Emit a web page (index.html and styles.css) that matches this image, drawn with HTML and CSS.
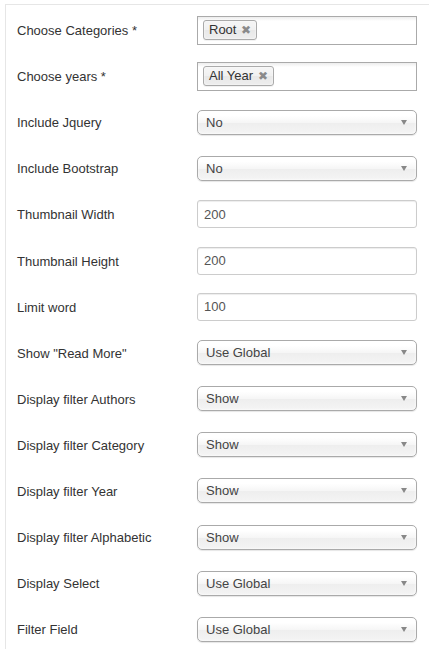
FILE: index.html
```html
<!DOCTYPE html>
<html>
<head>
<meta charset="utf-8">
<link rel="stylesheet" href="styles.css">
</head>
<body>
<div class="panel">
  <div class="row"><div class="label">Choose Categories *</div>
    <div class="multi"><span class="tag">Root<span class="x">&#x2716;</span></span></div></div>
  <div class="row"><div class="label">Choose years *</div>
    <div class="multi"><span class="tag">All Year<span class="x">&#x2716;</span></span></div></div>
  <div class="row"><div class="label">Include Jquery</div>
    <div class="select"><span>No</span><i class="arrow"></i></div></div>
  <div class="row"><div class="label">Include Bootstrap</div>
    <div class="select"><span>No</span><i class="arrow"></i></div></div>
  <div class="row"><div class="label">Thumbnail Width</div>
    <div class="input">200</div></div>
  <div class="row"><div class="label">Thumbnail Height</div>
    <div class="input">200</div></div>
  <div class="row"><div class="label">Limit word</div>
    <div class="input">100</div></div>
  <div class="row"><div class="label">Show "Read More"</div>
    <div class="select"><span>Use Global</span><i class="arrow"></i></div></div>
  <div class="row"><div class="label">Display filter Authors</div>
    <div class="select"><span>Show</span><i class="arrow"></i></div></div>
  <div class="row"><div class="label">Display filter Category</div>
    <div class="select"><span>Show</span><i class="arrow"></i></div></div>
  <div class="row"><div class="label">Display filter Year</div>
    <div class="select"><span>Show</span><i class="arrow"></i></div></div>
  <div class="row"><div class="label">Display filter Alphabetic</div>
    <div class="select"><span>Show</span><i class="arrow"></i></div></div>
  <div class="row"><div class="label">Display Select</div>
    <div class="select"><span>Use Global</span><i class="arrow"></i></div></div>
  <div class="row"><div class="label">Filter Field</div>
    <div class="select"><span>Use Global</span><i class="arrow"></i></div></div>
</div>
</body>
</html>
```

FILE: styles.css
```css
html, body {
  margin: 0;
  padding: 0;
  background: #fff;
  overflow: hidden;
}
body {
  font-family: "Liberation Sans", Arial, sans-serif;
  font-size: 13px;
  color: #333;
}
.panel {
  box-sizing: border-box;
  margin: 4px 0 0 5px;
  border-top: 1px solid #e6e6e6;
  border-left: 1px solid #e6e6e6;
  padding: 2px 0 0 11px;
  height: calc(100vh - 4px);
}
.row {
  display: flex;
  align-items: center;
  height: 46.1px;
}
.label {
  width: 180px;
  flex: none;
  padding-top: 1px;
}
.multi {
  box-sizing: border-box;
  width: 220px;
  height: 29px;
  border: 1px solid #aaa;
  background: linear-gradient(#eee 1%, #fff 15%);
  padding: 4px 5px;
  display: flex;
  align-items: center;
}
.tag {
  box-sizing: border-box;
  height: 20px;
  display: inline-flex;
  align-items: center;
  padding: 0 5px 0 5px;
  border: 1px solid #aaa;
  border-radius: 3px;
  background: linear-gradient(#f4f4f4 20%, #f0f0f0 50%, #e8e8e8 52%, #eee 100%);
  box-shadow: 0 0 2px #fff inset, 0 1px 0 rgba(0,0,0,0.05);
  color: #333;
  line-height: 18px;
}
.x {
  font-size: 12px;
  color: #8a8a8a;
  margin-left: 5px;
}
.select {
  box-sizing: border-box;
  width: 220px;
  height: 25px;
  border: 1px solid #aaa;
  border-radius: 5px;
  background: linear-gradient(#fff 20%, #f6f6f6 50%, #eee 52%, #f4f4f4 100%);
  box-shadow: 0 0 3px #fff inset, 0 1px 1px rgba(0,0,0,0.1);
  display: flex;
  align-items: center;
  justify-content: space-between;
  padding: 0 8px 0 8px;
  color: #444;
}
.arrow {
  width: 0;
  height: 0;
  border-left: 3.5px solid transparent;
  border-right: 3.5px solid transparent;
  border-top: 5px solid #888;
  margin-right: 1px;
}
.input {
  box-sizing: border-box;
  width: 220px;
  height: 28px;
  border: 1px solid #ccc;
  border-radius: 3px;
  box-shadow: inset 0 1px 1px rgba(0,0,0,0.075);
  padding: 0 6px;
  display: flex;
  align-items: center;
  color: #555;
}
```
